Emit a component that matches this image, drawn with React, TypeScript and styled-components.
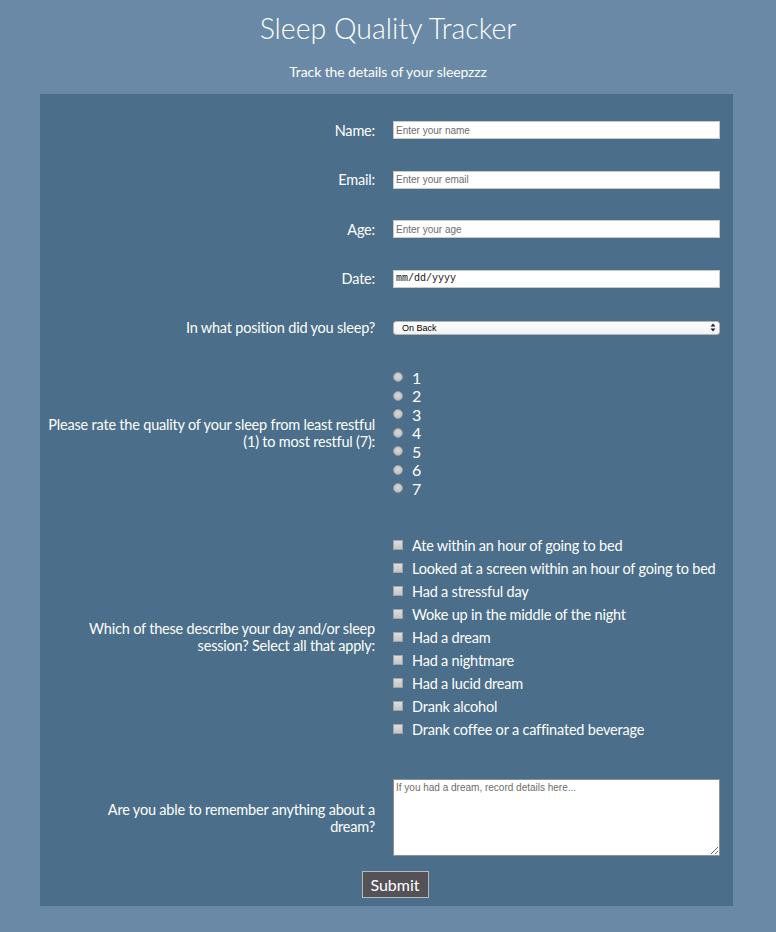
import styled, { createGlobalStyle } from 'styled-components';

const GlobalStyle = createGlobalStyle`
  html, body {
    margin: 0;
    padding: 0;
    background: #6989a6;
  }
  body {
    font-family: "Lato", sans-serif;
    color: #ffffff;
  }
`;

const thinFont = `"Lato", sans-serif`;
const controlFont = `"Liberation Sans", "Helvetica", sans-serif`;

const positions = ['On Back', 'On Side', 'On Stomach', 'Sitting Up'];

const ratings = [1, 2, 3, 4, 5, 6, 7];

const factors = [
    'Ate within an hour of going to bed',
    'Looked at a screen within an hour of going to bed',
    'Had a stressful day',
    'Woke up in the middle of the night',
    'Had a dream',
    'Had a nightmare',
    'Had a lucid dream',
    'Drank alcohol',
    'Drank coffee or a caffinated beverage',
];

function App() {
    return (
        <>
            <GlobalStyle/>
            <Header>
                <Title>Sleep Quality Tracker</Title>
                <Subtitle>Track the details of your sleepzzz</Subtitle>
            </Header>
            <Form onSubmit={e => e.preventDefault()}>
                <Row gap={31.5}>
                    <Label htmlFor="name">Name:</Label>
                    <TextInput id="name" type="text" placeholder="Enter your name"/>
                </Row>
                <Row gap={31.5}>
                    <Label htmlFor="email">Email:</Label>
                    <TextInput id="email" type="email" placeholder="Enter your email"/>
                </Row>
                <Row gap={31.5}>
                    <Label htmlFor="age">Age:</Label>
                    <TextInput id="age" type="number" placeholder="Enter your age"/>
                </Row>
                <Row gap={31.5}>
                    <Label htmlFor="date">Date:</Label>
                    <DateField id="date" type="text" placeholder="mm/dd/yyyy"/>
                </Row>
                <Row gap={32}>
                    <Label htmlFor="position">In what position did you sleep?</Label>
                    <SelectWrap>
                        <Select id="position" defaultValue="On Back">
                            {positions.map(p => <option key={p} value={p}>{p}</option>)}
                        </Select>
                        <SelectArrows width="6" height="9" viewBox="0 0 6 9">
                            <path d="M3 0.5 L5.5 3.5 H0.5 Z M3 8.5 L5.5 5.5 H0.5 Z" fill="#222"/>
                        </SelectArrows>
                    </SelectWrap>
                </Row>
                <Row gap={36}>
                    <Label as="span">Please rate the quality of your sleep from least restful<br/>(1) to most restful (7):</Label>
                    <OptionList>
                        {ratings.map(r => (
                            <OptionItem key={r} step={18.5} size={16}>
                                <Radio type="radio" name="rating" value={r}/>
                                {r}
                            </OptionItem>
                        ))}
                    </OptionList>
                </Row>
                <Row gap={38.5}>
                    <Label as="span">Which of these describe your day and/or sleep<br/>session? Select all that apply:</Label>
                    <OptionList>
                        {factors.map(f => (
                            <OptionItem key={f} step={23} size={14.5}>
                                <Checkbox type="checkbox" value={f}/>
                                {f}
                            </OptionItem>
                        ))}
                    </OptionList>
                </Row>
                <Row gap={15}>
                    <Label htmlFor="dream">Are you able to remember anything about a<br/>dream?</Label>
                    <TextArea id="dream" placeholder="If you had a dream, record details here..."/>
                </Row>
                <Actions>
                    <SubmitButton type="submit">Submit</SubmitButton>
                </Actions>
            </Form>
        </>
    );
}

export default App;


const Header = styled.header`
  text-align: center;
  height: 94px;
  padding-top: 10px;
  box-sizing: border-box;
`;

const Title = styled.h1`
  margin: 0;
  font-family: ${thinFont};
  font-weight: 300;
  font-size: 28.5px;
  line-height: 36px;
`;

const Subtitle = styled.p`
  margin: 17px 0 0;
  font-family: ${thinFont};
  font-size: 14px;
  line-height: 18px;
  letter-spacing: -0.1px;
`;

const Form = styled.form`
  margin: 0 43px 0 40px;
  width: 693px;
  box-sizing: border-box;
  background: #4b6e8a;
  padding: 27px 13px 8px 4px;
`;

type RowProps = {
    gap: number
}

const Row = styled.div<RowProps>`
  display: grid;
  grid-template-columns: 334px 327px;
  column-gap: 15px;
  align-items: center;
  margin-bottom: ${props => props.gap}px;
`;

const Label = styled.label`
  text-align: right;
  font-family: ${thinFont};
  font-size: 14.5px;
  line-height: 17px;
  letter-spacing: -0.2px;
  white-space: nowrap;
  color: #ffffff;
  padding-right: 3px;
`;

const TextInput = styled.input`
  box-sizing: border-box;
  display: block;
  width: 327px;
  height: 18px;
  margin: 0;
  padding: 1px 2px;
  border: 1px solid #c9c9c9;
  background: #ffffff;
  font-family: ${controlFont};
  font-size: 10px;
  color: #333;
  outline: none;

  &::placeholder {
    color: #6d6d6d;
  }
`;

const DateField = styled(TextInput)`
  font-family: "Liberation Mono", monospace;
  font-size: 10px;

  &::placeholder {
    color: #111;
  }
`;

const SelectWrap = styled.div`
  position: relative;
  width: 327px;
  height: 14px;
`;

const Select = styled.select`
  appearance: none;
  display: block;
  box-sizing: border-box;
  width: 100%;
  height: 14px;
  margin: 0;
  padding: 0 0 0 8px;
  border: 1px solid #b5b5b5;
  border-radius: 3px;
  background: linear-gradient(#ffffff, #f2f2f2);
  font-family: ${controlFont};
  font-size: 9px;
  line-height: 12px;
  color: #000;
  outline: none;
`;

const SelectArrows = styled.svg`
  position: absolute;
  right: 4px;
  top: 2.5px;
  pointer-events: none;
`;

const OptionList = styled.div`
  display: flex;
  flex-direction: column;
`;

type OptionItemProps = {
    step: number
    size: number
}

const OptionItem = styled.label<OptionItemProps>`
  display: flex;
  align-items: center;
  height: ${props => props.step}px;
  font-family: ${thinFont};
  font-size: ${props => props.size}px;
  letter-spacing: -0.2px;
  color: #ffffff;
  white-space: nowrap;
`;

const Radio = styled.input`
  appearance: none;
  flex-shrink: 0;
  box-sizing: border-box;
  width: 10px;
  height: 10px;
  margin: 0 9px 0 0;
  border-radius: 50%;
  border: 1px solid #a0a0a0;
  background: radial-gradient(circle at 50% 40%, #d8d8d8, #b9b9b9);
`;

const Checkbox = styled.input`
  appearance: none;
  flex-shrink: 0;
  box-sizing: border-box;
  width: 10px;
  height: 10px;
  margin: 0 9px 0 0;
  border: 1px solid #a4a4a4;
  background: linear-gradient(#dedede, #c4c4c4);
`;

const TextArea = styled.textarea`
  box-sizing: border-box;
  display: block;
  width: 327px;
  height: 77px;
  margin: 0;
  padding: 2px;
  border: 1px solid #8f8f8f;
  background: #ffffff;
  font-family: ${controlFont};
  font-size: 10px;
  color: #333;
  outline: none;

  &::placeholder {
    color: #6d6d6d;
  }
`;

const Actions = styled.div`
  display: flex;
  justify-content: center;
  padding-left: 26px;
`;

const SubmitButton = styled.button`
  width: 67px;
  height: 27px;
  padding: 0;
  background: #545157;
  border: 1px solid #b9b9b9;
  color: #ffffff;
  font-family: ${thinFont};
  font-size: 16px;
  cursor: pointer;
`;
